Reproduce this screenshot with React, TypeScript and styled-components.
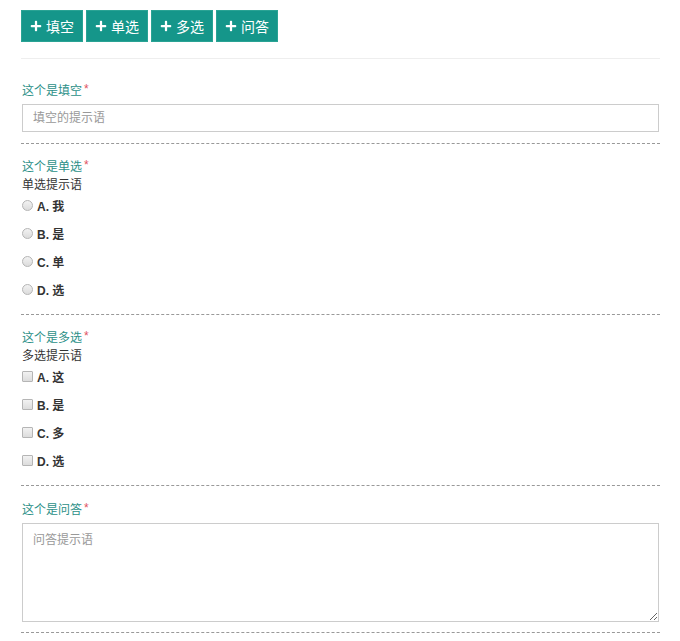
import React from "react";
import styled, { createGlobalStyle } from "styled-components";
import { FaPlus } from "react-icons/fa";

const GlobalStyle = createGlobalStyle`
  body {
    margin: 0;
    background: #fff;
    font-family: "Liberation Sans", "Noto Sans CJK SC", sans-serif;
    font-size: 12px;
    color: #333;
  }
`;

const Page = styled.div`
  padding: 10px 20px 0 21px;
  width: 639px;
`;

const Toolbar = styled.div`
  display: flex;
  gap: 3px;
`;

const AddButton = styled.button`
  display: flex;
  align-items: center;
  gap: 4px;
  height: 32px;
  padding: 0 8px;
  border: 1px solid #2aa394;
  background: #15968a;
  color: #fff;
  font-family: "Liberation Sans", "Noto Sans CJK SC", sans-serif;
  font-size: 14px;
  cursor: pointer;

  svg {
    width: 12px;
    height: 12px;
  }
`;

const Divider = styled.hr`
  border: 0;
  border-top: 1px solid #eee;
  margin: 16px 0 7px;
`;

const Section = styled.div<{ $top?: number; $bottom?: number }>`
  padding: ${(p) => p.$top ?? 14}px 0 ${(p) => p.$bottom ?? 10}px 1px;
  border-bottom: 1px dashed #999;
`;

const Line = styled.div`
  display: flex;
  align-items: center;
  height: 18px;
  overflow: hidden;
`;

const Title = styled(Line)`
  color: #2c9088;
`;

const Required = styled.span`
  color: #e0535f;
  margin-left: 2px;
`;

const Hint = styled(Line)`
  color: #333;
`;

const TextInput = styled.input`
  display: block;
  box-sizing: border-box;
  width: 637px;
  height: 28px;
  margin-top: 6px;
  padding: 0 10px;
  border: 1px solid #ccc;
  font-family: "Liberation Sans", "Noto Sans CJK SC", sans-serif;
  font-size: 12px;
  &::placeholder {
    color: #999;
  }
`;

const TextArea = styled.textarea`
  display: block;
  box-sizing: border-box;
  width: 637px;
  height: 99px;
  margin-top: 6px;
  padding: 6px 10px;
  border: 1px solid #ccc;
  font-family: "Liberation Sans", "Noto Sans CJK SC", sans-serif;
  font-size: 12px;
  &::placeholder {
    color: #999;
  }
`;

const Options = styled.div`
  display: flex;
  flex-direction: column;
  margin-top: -1px;
`;

const Option = styled.label`
  display: flex;
  align-items: center;
  height: 28px;
  gap: 4px;
  font-weight: bold;
  color: #333;
`;

const Mark = styled.input`
  appearance: none;
  margin: 0;
  width: 11px;
  height: 11px;
  border: 1px solid #b5b5b5;
  background: linear-gradient(#f2f2f2, #dcdcdc);
  border-radius: ${(p) => (p.type === "radio" ? "50%" : "1px")};
  box-sizing: border-box;
`;

type ChoiceProps = {
  title: string;
  hint: string;
  type: "radio" | "checkbox";
  items: string[];
};

const Choice = ({ title, hint, type, items }: ChoiceProps) => (
  <Section $top={12} $bottom={11}>
    <Title>
      {title}
      <Required>*</Required>
    </Title>
    <Hint>{hint}</Hint>
    <Options>
      {items.map((item, i) => (
        <Option key={i}>
          <Mark type={type} name={title} />
          {String.fromCharCode(65 + i)}. {item}
        </Option>
      ))}
    </Options>
  </Section>
);

const App = () => {
  const buttons = ["填空", "单选", "多选", "问答"];
  return (
    <>
      <GlobalStyle />
      <Page>
        <Toolbar>
          {buttons.map((b) => (
            <AddButton key={b}>
              <FaPlus />
              {b}
            </AddButton>
          ))}
        </Toolbar>
        <Divider />
        <Section $bottom={11}>
          <Title>
            这个是填空
            <Required>*</Required>
          </Title>
          <TextInput placeholder="填空的提示语" />
        </Section>
        <Choice
          title="这个是单选"
          hint="单选提示语"
          type="radio"
          items={["我", "是", "单", "选"]}
        />
        <Choice
          title="这个是多选"
          hint="多选提示语"
          type="checkbox"
          items={["这", "是", "多", "选"]}
        />
        <Section $top={13}>
          <Title>
            这个是问答
            <Required>*</Required>
          </Title>
          <TextArea placeholder="问答提示语" />
        </Section>
      </Page>
    </>
  );
};

export default App;
